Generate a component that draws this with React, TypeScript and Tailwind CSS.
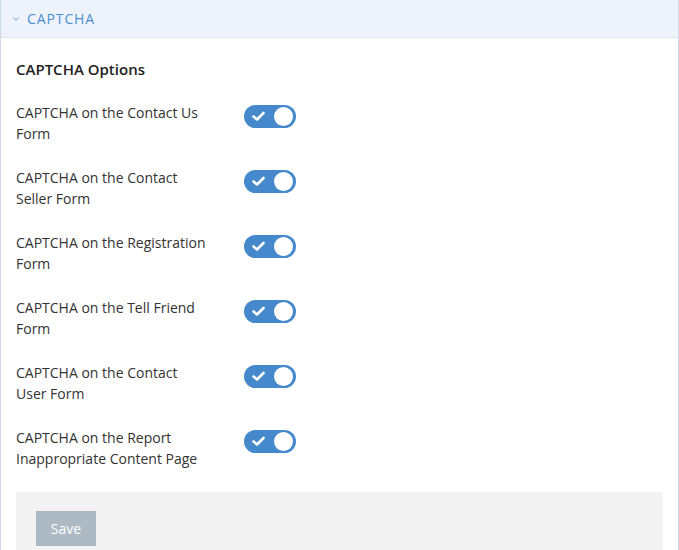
import { ChevronDown } from "lucide-react";

const options = [
  ["CAPTCHA on the Contact Us", "Form"],
  ["CAPTCHA on the Contact", "Seller Form"],
  ["CAPTCHA on the Registration", "Form"],
  ["CAPTCHA on the Tell Friend", "Form"],
  ["CAPTCHA on the Contact", "User Form"],
  ["CAPTCHA on the Report", "Inappropriate Content Page"],
];

function Toggle() {
  return (
    <div className="flex h-[23px] w-[52px] items-center justify-between rounded-full bg-[#4589cc] pl-[8px] pr-[3px]">
      <svg width="13" height="11" viewBox="0 0 13 11" fill="none">
        <path d="M1.5 5.5 L5 8.5 L11.5 2" stroke="white" strokeWidth="2.6" strokeLinecap="round" strokeLinejoin="round" />
      </svg>
      <div className="h-[19px] w-[19px] rounded-full bg-white" />
    </div>
  );
}

export default function App() {
  return (
    <div className="h-[550px] w-[679px] overflow-hidden border-x border-[#cfdae6] bg-white font-['Open_Sans',sans-serif] text-[#333]">
      <div className="flex h-[38px] items-center gap-[6px] border-b border-[#dde4ec] bg-[#eef3fb] pl-[10px]">
        <ChevronDown size={10} strokeWidth={2} className="text-[#4a8fd0]" />
        <span className="text-[14px] tracking-[0.9px] text-[#4a8fd0]">CAPTCHA</span>
      </div>
      <div className="px-[15px]">
        <h2 className="mt-[20px] mb-[21px] text-[15px] font-semibold text-[#222]">CAPTCHA Options</h2>
        <div className="flex flex-col gap-[23px]">
          {options.map(([a, b]) => (
            <div key={a + b} className="flex items-start">
              <div className="w-[228px] text-[14px] leading-[21px] text-[#333]">
                <div>{a}</div>
                <div>{b}</div>
              </div>
              <div className="pt-[3px]">
                <Toggle />
              </div>
            </div>
          ))}
        </div>
        <div className="mt-[23px] h-[80px] bg-[#f3f3f3] px-[20px] pt-[19px]">
          <button className="h-[35px] w-[60px] bg-[#adb9c3] text-[14px] text-white">Save</button>
        </div>
      </div>
    </div>
  );
}
